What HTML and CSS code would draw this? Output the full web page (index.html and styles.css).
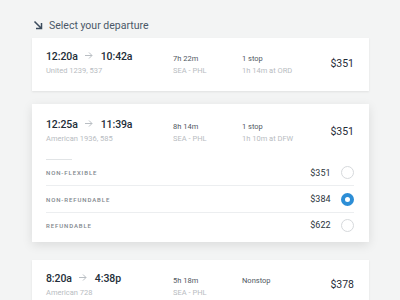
FILE: index.html
```html
<!DOCTYPE html>
<html lang="en">
<head>
    <meta charset="UTF-8">
    <meta name="viewport" content="width=device-width, initial-scale=1.0">
    <title>Select your departure</title>
    <link rel="stylesheet" href="styles.css">
</head>
<body>
    <div class="heading">
        <svg class="heading-icon" width="10" height="10" viewBox="0 0 10 10">
            <path d="M1.5 1.5 L8.5 8.5 M8.5 3 V8.5 H3" fill="none" stroke="#3b4b5d" stroke-width="1.5"/>
        </svg>
        <span>Select your departure</span>
    </div>

    <div class="card">
        <div class="flight">
            <div class="col">
                <div class="times">12:20a <svg class="arrow" width="8" height="7" viewBox="0 0 8 7"><path d="M0 3.5 H7 M4 0.5 L7 3.5 L4 6.5" fill="none" stroke="#b9bec3" stroke-width="1"/></svg> 10:42a</div>
                <div class="sub">United 1239, 537</div>
            </div>
            <div class="col">
                <div class="info">7h 22m</div>
                <div class="sub">SEA - PHL</div>
            </div>
            <div class="col">
                <div class="info">1 stop</div>
                <div class="sub">1h 14m at ORD</div>
            </div>
            <div class="price">$351</div>
        </div>
    </div>

    <div class="card open">
        <div class="flight">
            <div class="col">
                <div class="times">12:25a <svg class="arrow" width="8" height="7" viewBox="0 0 8 7"><path d="M0 3.5 H7 M4 0.5 L7 3.5 L4 6.5" fill="none" stroke="#b9bec3" stroke-width="1"/></svg> 11:39a</div>
                <div class="sub">American 1936, 585</div>
            </div>
            <div class="col">
                <div class="info">8h 14m</div>
                <div class="sub">SEA - PHL</div>
            </div>
            <div class="col">
                <div class="info">1 stop</div>
                <div class="sub">1h 10m at DFW</div>
            </div>
            <div class="price">$351</div>
        </div>
        <div class="fares">
            <div class="fares-rule"></div>
            <div class="fare">
                <span class="fare-name">NON-FLEXIBLE</span>
                <span class="fare-price">$351</span>
                <span class="radio"></span>
            </div>
            <div class="fare">
                <span class="fare-name">NON-REFUNDABLE</span>
                <span class="fare-price">$384</span>
                <span class="radio on"></span>
            </div>
            <div class="fare">
                <span class="fare-name">REFUNDABLE</span>
                <span class="fare-price">$622</span>
                <span class="radio"></span>
            </div>
        </div>
    </div>

    <div class="card">
        <div class="flight">
            <div class="col">
                <div class="times">8:20a <svg class="arrow" width="8" height="7" viewBox="0 0 8 7"><path d="M0 3.5 H7 M4 0.5 L7 3.5 L4 6.5" fill="none" stroke="#b9bec3" stroke-width="1"/></svg> 4:38p</div>
                <div class="sub">American 728</div>
            </div>
            <div class="col">
                <div class="info">5h 18m</div>
                <div class="sub">SEA - PHL</div>
            </div>
            <div class="col">
                <div class="info">Nonstop</div>
                <div class="sub"></div>
            </div>
            <div class="price">$378</div>
        </div>
    </div>
</body>
</html>
```

FILE: styles.css
```css
body {
    font-family: Roboto, "Liberation Sans", sans-serif;
    margin: 0;
    padding: 18px 31px 0 32px;
    background: #f3f4f4;
}

.heading {
    display: flex;
    align-items: center;
    gap: 6px;
    height: 14px;
    margin-bottom: 6px;
    padding-left: 1px;
    font-size: 10.5px;
    color: #4a5868;
}

.heading-icon {
    display: block;
}

.card {
    background: white;
    margin-bottom: 13px;
    box-shadow: 0 1px 2px rgba(0, 0, 0, 0.08);
}

.card.open {
    margin-bottom: 18px;
    box-shadow: 0 3px 10px rgba(0, 0, 0, 0.1);
}

.flight {
    display: grid;
    grid-template-columns: 127px 69px 1fr auto;
    align-items: center;
    padding: 12px 15px 15px 14px;
}

.open .flight {
    padding-top: 14px;
    padding-bottom: 0;
}

.col {
    display: flex;
    flex-direction: column;
    justify-content: flex-end;
    align-self: stretch;
}

.times {
    font-size: 10.5px;
    line-height: 14px;
    font-weight: 500;
    color: #232e39;
    letter-spacing: -0.1px;
}

.arrow {
    margin: 0 5px;
    vertical-align: 1px;
}

.info {
    font-size: 7.5px;
    line-height: 10px;
    color: #50585f;
}

.sub {
    font-size: 7.5px;
    line-height: 10px;
    height: 10px;
    margin-top: 2px;
    color: #b8bcc1;
}

.price {
    font-size: 10.5px;
    color: #1f2b37;
}

.fares {
    padding: 0 15px 3.5px 14px;
}

.fares-rule {
    width: 26px;
    height: 1px;
    margin-top: 15px;
    background: #e1e4e6;
}

.fare {
    display: flex;
    align-items: center;
    height: 25.4px;
}

.fare + .fare {
    border-top: 1px solid #eceef0;
}

.fare-name {
    flex: 1;
    font-size: 6px;
    font-weight: 500;
    letter-spacing: 0.9px;
    color: #80868c;
}

.fare-price {
    font-size: 9px;
    color: #2c3640;
    margin-right: 10.5px;
}

.radio {
    width: 13px;
    height: 13px;
    box-sizing: border-box;
    border: 1px solid #d6d9dc;
    border-radius: 50%;
}

.radio.on {
    border: 4px solid #2d8ed6;
    background: white;
}
```
